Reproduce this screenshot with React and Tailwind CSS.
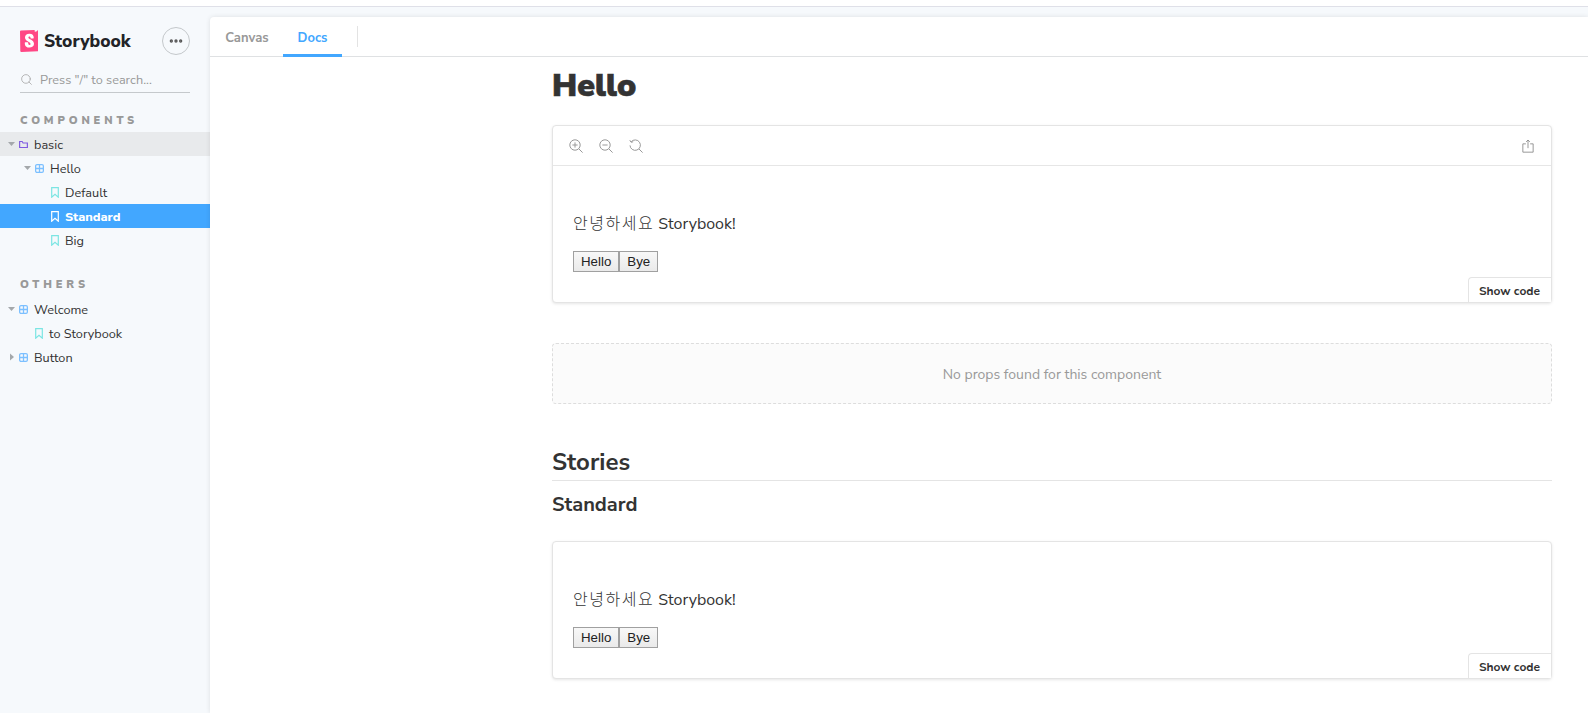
import React from "react";
import { Search, MoreHorizontal } from "lucide-react";

const nunito = "font-['Nunito_Sans','Lato','Noto_Sans_CJK_KR',sans-serif]";

const Caret = ({ open }) => (
  <svg viewBox="0 0 8 8" className="w-2 h-2 flex-shrink-0 text-[#a4a8ab]" fill="currentColor">
    {open ? <path d="M0 2h7L3.5 6z" /> : <path d="M2 0.5v7L6 4z" />}
  </svg>
);

const FolderIcon = () => (
  <svg viewBox="0 0 10 10" className="w-[9px] h-[9px] flex-shrink-0 text-[#7f5be0]" fill="none" stroke="currentColor" strokeWidth="1.3">
    <path d="M.7 2V8.300H9.300V3.300H4.500L3.500 1.700H.7z" />
  </svg>
);

const ComponentIcon = () => (
  <svg viewBox="0 0 10 10" className="w-[9px] h-[9px] flex-shrink-0 text-[#7cc0ff]" fill="none" stroke="currentColor" strokeWidth="1.4">
    <rect x=".7" y=".7" width="8.600" height="8.600" rx="1.500" />
    <path d="M5 .5v9M.5 5h9" />
  </svg>
);

const BookmarkIcon = ({ active }) => (
  <svg viewBox="0 0 8 11" className={`w-2 h-[11px] flex-shrink-0 ${active ? "text-white" : "text-[#7ce5e3]"}`} fill="none" stroke="currentColor" strokeWidth="1.2">
    <path d="M.7.6h6.600v9.600L4 7.400.7 10.200z" />
  </svg>
);

const TreeRow = ({ depth, caret, icon, label, selected, highlighted }) => (
  <div
    className={`h-6 flex items-center text-[12.7px] ${depth === 0 ? "pl-2" : depth === 1 ? "pl-6" : "pl-10"} ${
      selected ? "bg-[#42a7ff] text-white font-extrabold" : highlighted ? "bg-[#e8eaec] text-[#333333]" : "text-[#333333]"
    }`}
  >
    <span className="w-[11px] flex-shrink-0">{caret && <Caret open={caret === "open"} />}</span>
    {icon}
    <span className="ml-[6px] pt-[2px]">{label}</span>
  </div>
);

const SectionLabel = ({ children, className }) => (
  <div className={`pl-5 text-[11px] font-black tracking-[0.35em] text-[#999999] ${className}`}>{children}</div>
);

const Sidebar = () => (
  <aside className="w-[210px] flex-shrink-0 bg-[#f6f9fc]">
    <div className="flex items-center justify-between pl-5 pr-[20px] pt-[20px]">
      <div className="flex items-center">
        <svg viewBox="0 0 18 22" className="w-[18px] h-[22px]">
          <path d="M1 .6 14.600 0l.2 1.800L16.400 1.600 18 0v21.200L1.300 22a1 1 0 0 1-1-.9L0 1.600A1 1 0 0 1 1 .6z" fill="#ff4785" />
          <path d="M10.600 8.200c0 .5 2.800.3 3.200 0 0-2.900-1.500-4.400-4.400-4.400-2.800 0-4.400 1.500-4.400 3.800 0 4 5.500 4.100 5.500 6.300 0 .7-.3 1-1 1-.9 0-1.300-.5-1.300-2.200 0-.4-3.300-.5-3.400 0-.2 3.800 2 4.900 4.700 4.900 2.500 0 4.500-1.300 4.500-3.800 0-4.300-5.600-4.200-5.600-6.300 0-.9.6-1 1-1 .4 0 1.100.1 1.200 1.700z" fill="#ffffff" />
        </svg>
        <span className="ml-[6px] text-[17.500px] leading-[22px] font-extrabold text-[#222327]">Storybook</span>
      </div>
      <button className="w-7 h-7 rounded-full border border-[#c4c8cb] flex items-center justify-center text-[#555555]">
        <MoreHorizontal className="w-4 h-4" strokeWidth={3} />
      </button>
    </div>
    <div className="mt-[12px] mx-5 h-[26px] flex items-center border-b border-[#c5c9cc] text-[12.700px] text-[#999999]">
      <Search className="w-[13px] h-[13px] text-[#a8a8a8]" strokeWidth={1.5} />
      <span className="ml-[7px]">Press "/" to search...</span>
    </div>
    <SectionLabel className="mt-[20px] leading-[16px]">COMPONENTS</SectionLabel>
    <div className="mt-[3px]">
      <TreeRow depth={0} caret="open" icon={<FolderIcon />} label="basic" highlighted />
      <TreeRow depth={1} caret="open" icon={<ComponentIcon />} label="Hello" />
      <TreeRow depth={2} icon={<BookmarkIcon />} label="Default" />
      <TreeRow depth={2} icon={<BookmarkIcon active />} label="Standard" selected />
      <TreeRow depth={2} icon={<BookmarkIcon />} label="Big" />
    </div>
    <SectionLabel className="mt-[25px] leading-[16px]">OTHERS</SectionLabel>
    <div className="mt-1">
      <TreeRow depth={0} caret="open" icon={<ComponentIcon />} label="Welcome" />
      <TreeRow depth={1} icon={<BookmarkIcon />} label="to Storybook" />
      <TreeRow depth={0} caret="closed" icon={<ComponentIcon />} label="Button" />
    </div>
  </aside>
);

const ZoomToolbar = () => (
  <div className="h-10 flex items-center justify-between border-b border-[#e6e6e6] pl-4 pr-[17px] text-[#999999]">
    <div className="flex items-center gap-[16px]">
      <svg viewBox="0 0 14 14" className="w-[14px] h-[14px]" fill="none" stroke="currentColor">
        <circle cx="6" cy="6" r="5.200" />
        <path d="M9.800 9.800 13.600 13.600M6 3.400v5.200M3.400 6h5.200" />
      </svg>
      <svg viewBox="0 0 14 14" className="w-[14px] h-[14px]" fill="none" stroke="currentColor">
        <circle cx="6" cy="6" r="5.200" />
        <path d="M9.800 9.800 13.600 13.600M3.400 6h5.200" />
      </svg>
      <svg viewBox="0 0 14 14" className="w-[14px] h-[14px]" fill="none" stroke="currentColor">
        <path d="M2.200 2.800A5.200 5.200 0 1 1 1 6.400M.8 1.200 2 3.200l2.200-.4M10 10l3.600 3.600" />
      </svg>
    </div>
    <svg viewBox="0 0 14 16" className="w-3 h-[14px] text-[#888888]" fill="none" stroke="currentColor">
      <path d="M4.500 5.500H1v9.700h12V5.500H9.500M7 10.500V1M4.800 3.200 7 1l2.200 2.200" />
    </svg>
  </div>
);

const Preview = ({ toolbar, bodyClass }) => (
  <div className="relative rounded border border-[#e4e4e4] shadow-[0_1px_3px_rgba(0,0,0,0.1)] bg-white">
    {toolbar && <ZoomToolbar />}
    <div className={`px-5 ${bodyClass}`}>
      <p className="text-[16px] leading-[24px] text-[#333333] font-['Nunito_Sans','Noto_Sans_CJK_KR',sans-serif]">
        <span className="tracking-[1.5px] font-['Noto_Sans_CJK_KR',sans-serif] font-light">안녕하세요</span> Storybook!
      </p>
      <div className="flex mt-[15px] font-['Liberation_Sans',sans-serif] text-[13.300px] text-[#222222]">
        <button className="h-[21px] px-[7px] bg-gradient-to-b from-[#f8f8f8] to-[#eaeaea] border border-[#a0a0a0] leading-none">Hello</button>
        <button className="h-[21px] px-[7px] bg-gradient-to-b from-[#f8f8f8] to-[#eaeaea] border border-[#a0a0a0] leading-none">Bye</button>
      </div>
    </div>
    <div className="absolute right-0 bottom-0 h-[25px] w-[83px] flex items-center justify-center bg-white border-l border-t border-[#e4e4e4] rounded-tl pt-[2px] pr-[1px] text-[12px] font-bold text-[#333333]">
      Show code
    </div>
  </div>
);

const Main = () => (
  <main className="flex-1 pt-[10px] min-w-0 bg-[#f6f9fc]">
    <div className="h-full rounded-tl bg-white shadow-[0_0_5px_rgba(0,0,0,0.1)]">
      <div className="h-[40px] flex items-stretch border-b border-[#dfe1e3] text-[13px] font-bold">
        <div className="w-[74px] flex items-center justify-center text-[#999999] pt-[4px]">Canvas</div>
        <div className="w-[59px] ml-[-1px] flex items-center justify-center text-[#42a7ff] border-b-[3px] border-[#42a7ff] mb-[-1px] pt-[6px]">Docs</div>
        <div className="w-px my-[9px] ml-[15px] bg-[#e3e3e3]"></div>
      </div>
      <div className="pl-[342px] pr-[36px]">
        <h1 className="mt-[9px] text-[32px] leading-[40px] font-black text-[#333333] [-webkit-text-stroke:0.6px_#333333]">Hello</h1>
        <div className="mt-[19px]">
          <Preview toolbar bodyClass="pt-[44px] pb-[30px]" />
        </div>
        <div className="mt-[40px] h-[61px] flex items-center justify-center rounded border border-dashed border-[#dddddd] bg-[#fbfbfb] pt-[2px] text-[14px] text-[#999999]">
          No props found for this component
        </div>
        <h2 className="mt-[40px] text-[24px] leading-[36px] font-bold text-[#333333] border-b border-[#e4e4e4]">Stories</h2>
        <h3 className="mt-[8px] text-[20px] leading-[32px] font-bold text-[#333333]">Standard</h3>
        <div className="mt-[20px]">
          <Preview bodyClass="pt-[44px] pb-[30px]" />
        </div>
      </div>
    </div>
  </main>
);

export default function App() {
  return (
    <div className={`w-[1588px] h-[713px] overflow-hidden bg-white ${nunito}`}>
      <div className="h-[7px] border-b border-[#dfe0e8]"></div>
      <div className="flex h-[706px]">
        <Sidebar />
        <Main />
      </div>
    </div>
  );
}
